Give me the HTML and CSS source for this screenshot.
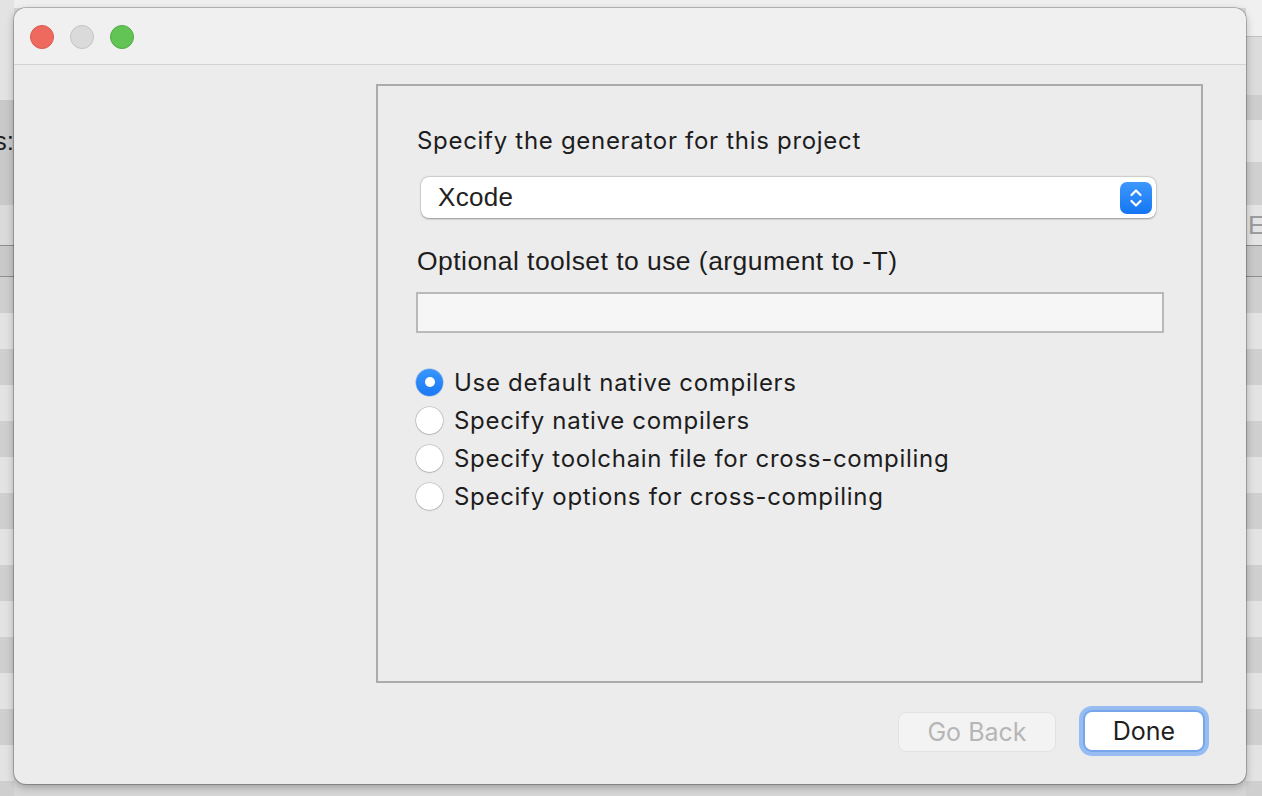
FILE: index.html
```html
<!DOCTYPE html>
<html>
<head>
<meta charset="utf-8">
<link rel="stylesheet" href="styles.css">
</head>
<body>
<div class="desktop">
  <div class="side side-left">
    <div class="row r-top-l"></div>
    <div class="row r-s"><span class="bg-text">s:</span></div>
    <div class="row r-light40"></div>
    <div class="row r-dark30 line-top"></div>
    <div class="row stripes line-top"></div>
  </div>
  <div class="side-gap"></div>
  <div class="side side-right">
    <div class="row r-r1"></div>
    <div class="row r-r2 line-top-light"></div>
    <div class="row r-r3"></div>
    <div class="row r-r4"></div>
    <div class="row r-r5"></div>
    <div class="row r-r6"><span class="bg-text-e">E</span></div>
    <div class="row r-dark30 line-top"></div>
    <div class="row stripes line-top"></div>
  </div>
</div>

<div class="window">
  <div class="titlebar">
    <span class="light light-close"></span>
    <span class="light light-min"></span>
    <span class="light light-zoom"></span>
  </div>
  <div class="content">
    <div class="group">
      <div class="label label-gen">Specify the generator for this project</div>
      <div class="select">
        <span class="select-value">Xcode</span>
        <span class="stepper">
          <svg width="32" height="32" viewBox="0 0 32 32">
            <defs>
              <linearGradient id="sg" x1="0" y1="0" x2="0" y2="1">
                <stop offset="0" stop-color="#3d97fd"/>
                <stop offset="1" stop-color="#1476f3"/>
              </linearGradient>
            </defs>
            <rect x="0" y="0" width="32" height="32" rx="7" fill="url(#sg)"/>
            <path d="M11.5 13 L16 8.5 L20.5 13" fill="none" stroke="#fff" stroke-width="2.2" stroke-linecap="round" stroke-linejoin="round"/>
            <path d="M11.5 19 L16 23.5 L20.5 19" fill="none" stroke="#fff" stroke-width="2.2" stroke-linecap="round" stroke-linejoin="round"/>
          </svg>
        </span>
      </div>
      <div class="label label-opt">Optional toolset to use (argument to -T)</div>
      <div class="textfield"></div>
      <div class="radios">
        <div class="radio-row"><span class="radio radio-on"><span class="radio-dot"></span></span><span class="radio-label">Use default native compilers</span></div>
        <div class="radio-row"><span class="radio"></span><span class="radio-label">Specify native compilers</span></div>
        <div class="radio-row"><span class="radio"></span><span class="radio-label">Specify toolchain file for cross-compiling</span></div>
        <div class="radio-row"><span class="radio"></span><span class="radio-label">Specify options for cross-compiling</span></div>
      </div>
    </div>
    <div class="footer">
      <div class="btn btn-disabled">Go Back</div>
      <div class="btn btn-default">Done</div>
    </div>
  </div>
</div>
</body>
</html>
```
FILE: styles.css
```css
* { box-sizing: border-box; }
html, body { margin: 0; padding: 0; }
body {
  width: 1262px;
  height: 796px;
  overflow: hidden;
  position: relative;
  font-family: Inter, "Liberation Sans", sans-serif;
  background: #e4e4e4;
}

/* backdrop */
.desktop {
  position: absolute;
  inset: 0;
  display: flex;
}
.side {
  display: flex;
  flex-direction: column;
  overflow: hidden;
}
.side-left { width: 14px; }
.side-right { width: 16px; }
.side-gap {
  flex: 1;
  background: linear-gradient(#efefef 0 8px, #d6d6d6 8px);
}
.row { position: relative; flex: none; }
.line-top { border-top: 1px solid #8e8e8e; }
.line-top-light { border-top: 1px solid #c2c2c2; }
.r-top-l { height: 100px; background: #e3e3e3; }
.r-s { height: 105px; background: #c9c9c9; }
.r-light40 { height: 40px; background: #dadada; }
.r-dark30 { height: 31px; background: #c9c9c9; }
.stripes {
  flex: 1;
  background: repeating-linear-gradient(#cfcfcf 0 36px, #e3e3e3 36px 72px);
}
.r-r1 { height: 36px; background: #f0f0f0; }
.r-r2 { height: 59px; background: #dcdcdc; }
.r-r3 { height: 25px; background: #cdcdcd; }
.r-r4 { height: 42px; background: #e4e4e4; }
.r-r5 { height: 43px; background: #d0d0d0; }
.r-r6 { height: 40px; background: #e4e4e4; }
.bg-text {
  position: absolute;
  right: 0;
  top: 26px;
  font-family: "Liberation Sans", sans-serif;
  font-size: 26px;
  line-height: 30px;
  color: #1e1e1e;
}
.bg-text-e {
  position: absolute;
  left: 2px;
  top: 5px;
  font-family: "Liberation Sans", sans-serif;
  font-size: 26px;
  line-height: 30px;
  color: #9c9c9c;
}

/* window */
.window {
  position: absolute;
  left: 14px;
  top: 8px;
  width: 1232px;
  height: 776px;
  border-radius: 12px;
  overflow: hidden;
  background: #ececec;
  box-shadow: 0 0 0 1px rgba(0,0,0,0.22), 0 3px 8px rgba(0,0,0,0.28);
  display: flex;
  flex-direction: column;
}
.titlebar {
  height: 57px;
  flex: none;
  background: #f0f0f0;
  border-bottom: 1px solid #d2d2d2;
  display: flex;
  align-items: center;
  gap: 16px;
  padding: 2px 0 0 16px;
}
.light {
  width: 24px;
  height: 24px;
  border-radius: 50%;
}
.light-close { background: #ee6a5f; border: 1px solid #d85b51; }
.light-min { background: #dadada; border: 1px solid #c4c4c4; }
.light-zoom { background: #61c454; border: 1px solid #51ab45; }

.content {
  flex: 1;
  display: flex;
  flex-direction: column;
  padding: 19px 43px 0 362px;
}
.group {
  height: 599px;
  border: 2px solid #ababab;
  display: flex;
  flex-direction: column;
  padding-left: 38px;
  padding-right: 37px;
}
.label {
  color: #1d1d1d;
}
.label-gen {
  margin-top: 41px;
  margin-left: 1px;
  font-size: 24px;
  line-height: 28px;
  letter-spacing: 0.7px;
}
.select {
  margin: 22px 8px 0 5px;
  height: 41px;
  background: #fff;
  border-radius: 8px;
  box-shadow: 0 0.5px 2px rgba(0,0,0,0.35), 0 0 0 0.5px rgba(0,0,0,0.08);
  display: flex;
  align-items: center;
  justify-content: space-between;
  padding: 0 4px 0 17px;
}
.select-value {
  font-family: "Liberation Sans", sans-serif;
  font-size: 26px;
  color: #222;
  letter-spacing: 0.3px;
}
.stepper { display: flex; }
.label-opt {
  margin-top: 28px;
  margin-left: 1px;
  font-family: "Liberation Sans", sans-serif;
  font-size: 26.5px;
  line-height: 30px;
  letter-spacing: 0.45px;
}
.textfield {
  margin-top: 16px;
  height: 41px;
  background: #f6f6f6;
  border: 2px solid #b9b9b9;
}
.radios {
  margin-top: 30px;
  display: flex;
  flex-direction: column;
}
.radio-row {
  height: 38px;
  display: flex;
  align-items: center;
  gap: 11px;
}
.radio {
  width: 27px;
  height: 27px;
  border-radius: 50%;
  background: #fff;
  box-shadow: 0 0 0 0.5px rgba(0,0,0,0.2), 0 0.5px 1.5px rgba(0,0,0,0.25);
  display: flex;
  align-items: center;
  justify-content: center;
  flex: none;
}
.radio-on {
  background: linear-gradient(#3896fd, #1a79f4);
  box-shadow: 0 0 0 0.5px rgba(0,80,200,0.4);
}
.radio-dot {
  width: 10px;
  height: 10px;
  border-radius: 50%;
  background: #fff;
}
.radio-label {
  font-size: 24px;
  letter-spacing: 0.7px;
  color: #1d1d1d;
}

.footer {
  display: flex;
  justify-content: flex-end;
  align-items: center;
  gap: 29px;
  margin-top: 29px;
  margin-right: 0;
}
.btn {
  display: flex;
  align-items: center;
  justify-content: center;
  font-size: 25px;
  border-radius: 8px;
}
.btn-disabled {
  width: 158px;
  height: 40px;
  background: #f3f3f3;
  border: 1px solid #e2e2e2;
  color: #b6b6b6;
}
.btn-default {
  width: 118px;
  height: 38px;
  background: #fff;
  color: #1f1f1f;
  border-radius: 7px;
  box-shadow: 0 0 0 2px #77a6ea, 0 0 0 6px #96bcf2;
  margin-top: -2px;
}
```
